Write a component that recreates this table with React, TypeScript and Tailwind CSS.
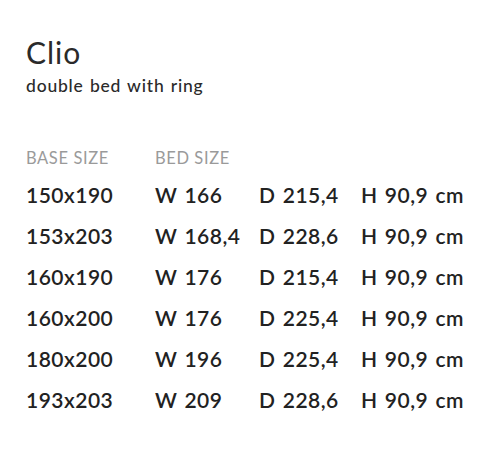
import React from "react";

const rows = [
  ["150x190", "W 166", "D 215,4", "H 90,9 cm"],
  ["153x203", "W 168,4", "D 228,6", "H 90,9 cm"],
  ["160x190", "W 176", "D 215,4", "H 90,9 cm"],
  ["160x200", "W 176", "D 225,4", "H 90,9 cm"],
  ["180x200", "W 196", "D 225,4", "H 90,9 cm"],
  ["193x203", "W 209", "D 228,6", "H 90,9 cm"],
];

export default function App() {
  return (
    <div className="w-[502px] h-[471px] bg-white text-[#222] pl-[26px] pt-[34px]" style={{ fontFamily: "Lato, 'Open Sans', sans-serif" }}>
      <h1 className="text-[30px] leading-[36px] font-normal tracking-[1px] text-[#2a2a2a]">Clio</h1>
      <p className="text-[17.5px] leading-[22px] font-medium tracking-[0.8px] [word-spacing:1px] mt-[5px] text-[#2a2a2a]">double bed with ring</p>
      <div className="mt-[49px] grid grid-cols-[129px_104px_102px_auto] text-[#9a9a9a] text-[16.5px] leading-[24px] font-normal tracking-[0.6px]">
        <div>BASE SIZE</div>
        <div>BED SIZE</div>
        <div></div>
        <div></div>
      </div>
      <div className="mt-[4px] grid grid-cols-[129px_104px_102px_auto] text-[21px] leading-[41px] font-semibold tracking-[0.5px] [word-spacing:1.5px] text-[#222]">
        {rows.map((r) => (
          <React.Fragment key={r[0]}>
            {r.map((c, i) => (
              <div key={i} className="whitespace-nowrap">{c}</div>
            ))}
          </React.Fragment>
        ))}
      </div>
    </div>
  );
}
